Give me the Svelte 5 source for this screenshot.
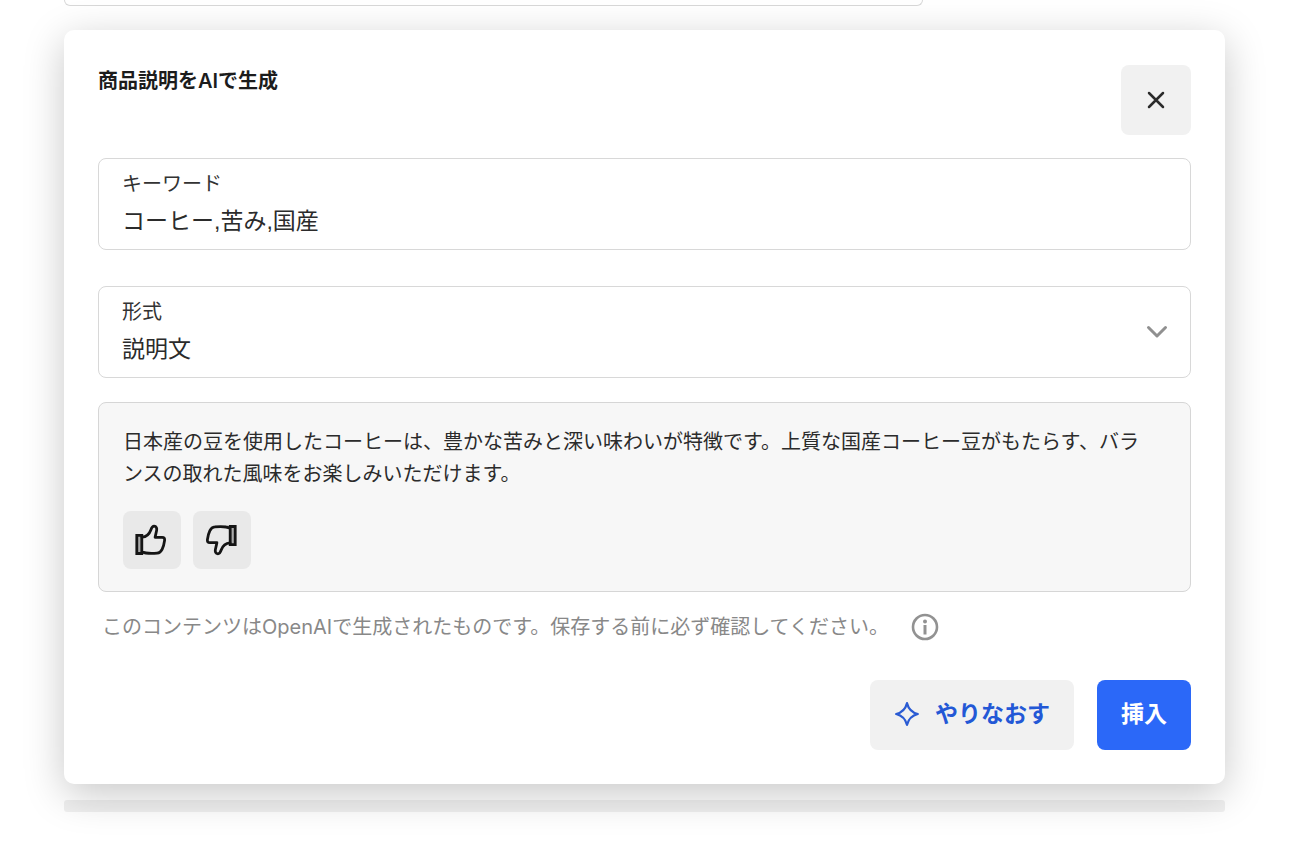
<script>
	let keywords = $state('コーヒー,苦み,国産');
	let format = $state('説明文');
	let open = $state(true);
	let rating = $state(null);

	const formats = ['説明文', '箇条書き'];
	const result =
		'日本産の豆を使用したコーヒーは、豊かな苦みと深い味わいが特徴です。上質な国産コーヒー豆がもたらす、バランスの取れた風味をお楽しみいただけます。';
</script>

<!-- thumb icon, flipped for the "down" button -->
{#snippet thumb()}
	<svg width="32" height="32" viewBox="0 0 32 32" fill="none" stroke="#151515" stroke-width="2.8" stroke-linejoin="round" stroke-linecap="round" aria-hidden="true">
		<path d="M1.800 11.300h5v18.200h-5z" fill="#aaa" stroke-linejoin="miter" />
		<path d="M7 13.200c4.500-.4 7.400-3.400 8.700-7 .8-2.300 1.600-4 3.400-4 2.300 0 3 2.100 2.500 4.300l-1.500 6.800h7c2.100 0 2.700 1.300 2.500 3-.5 3.800-1.300 6.600-2.500 9-1.200 2.400-2.600 3.600-4.900 3.800-3.600.4-8.300.4-11.300-.1-1.400-.2-2.400-.7-3.500-1" />
	</svg>
{/snippet}

<div class="page">
	<div class="behind-field"></div>

	{#if open}
		<section class="dialog" aria-labelledby="dialog-title">
			<header>
				<h2 id="dialog-title">商品説明をAIで生成</h2>
				<button class="close" aria-label="閉じる" onclick={() => (open = false)}>
					<svg width="18" height="18" viewBox="0 0 18 18" fill="none" stroke="#2b2b2b" stroke-width="2.500" stroke-linecap="round" aria-hidden="true">
						<path d="M2 2l14 14M16 2L2 16" />
					</svg>
				</button>
			</header>

			<div class="field">
				<div class="field-body">
					<label for="keywords">キーワード</label>
					<input id="keywords" type="text" bind:value={keywords} />
				</div>
			</div>

			<div class="field">
				<div class="field-body">
					<label for="format">形式</label>
					<select id="format" bind:value={format}>
						{#each formats as item}
							<option value={item}>{item}</option>
						{/each}
					</select>
				</div>
				<svg class="chevron" width="22" height="14" viewBox="0 0 22 14" fill="none" stroke="#909090" stroke-width="3" stroke-linecap="round" stroke-linejoin="round" aria-hidden="true">
					<path d="M2.500 2.500l8.500 8.500 8.500-8.500" />
				</svg>
			</div>

			<div class="result">
				<p>{result}</p>
				<div class="ratings">
					<button aria-label="良い" aria-pressed={rating === 'up'} onclick={() => (rating = 'up')}>
						{@render thumb()}
					</button>
					<button class="down" aria-label="悪い" aria-pressed={rating === 'down'} onclick={() => (rating = 'down')}>
						{@render thumb()}
					</button>
				</div>
			</div>

			<div class="note">
				<span>このコンテンツはOpenAIで生成されたものです。保存する前に必ず確認してください。</span>
				<svg width="28" height="28" viewBox="0 0 28 28" aria-hidden="true">
					<circle cx="14" cy="14" r="12" fill="none" stroke="#929292" stroke-width="2.600" />
					<circle cx="14" cy="8.600" r="2" fill="#929292" />
					<path d="M14 12v9.500" stroke="#929292" stroke-width="3" />
				</svg>
			</div>

			<footer>
				<button class="redo">
					<svg width="26" height="26" viewBox="0 0 26 26" fill="none" stroke="#2a5bd3" stroke-width="2.300" stroke-linejoin="round" aria-hidden="true">
						<path d="M13 2.200Q15.200 10.800 23.800 13 15.200 15.200 13 23.800 10.800 15.200 2.200 13 10.800 10.800 13 2.200z" />
					</svg>
					やりなおす
				</button>
				<button class="insert">挿入</button>
			</footer>
		</section>
	{/if}

	<div class="behind-bar"></div>
</div>

<style>
	:global(body) {
		background: #fff;
	}

	.page {
		box-sizing: border-box;
		padding: 0 75px 28px 64px;
		font-family: Inter, 'Noto Sans CJK JP', sans-serif;
		color: #2b2b2b;
	}

	.behind-field {
		box-sizing: border-box;
		width: 74%;
		height: 6px;
		border: 1px solid #d8d8d8;
		border-top: none;
		border-radius: 0 0 8px 8px;
	}

	.behind-bar {
		height: 12px;
		margin-top: 16px;
		border-radius: 3px;
		background: rgba(0, 0, 0, 0.06);
	}

	.dialog {
		/* keeps the shadow above the blocks around it */
		position: relative;
		z-index: 1;
		margin-top: 24px;
		padding: 35px 34px 34px;
		border-radius: 10px;
		background: #fff;
		box-shadow: 0 10px 40px rgba(0, 0, 0, 0.22);
	}

	header {
		display: flex;
		align-items: flex-start;
		justify-content: space-between;
		margin-bottom: 23px;
	}

	h2 {
		margin: 0;
		font-size: 20px;
		line-height: 32px;
		font-weight: 600;
		color: #1c1c1c;
	}

	button {
		display: flex;
		align-items: center;
		justify-content: center;
		padding: 0;
		border: none;
		border-radius: 8px;
		background: #f1f1f1;
		font: inherit;
		cursor: pointer;
	}

	.close {
		width: 70px;
		height: 70px;
	}

	.field {
		display: flex;
		align-items: center;
		margin-bottom: 36px;
		padding: 13px 22px 13px 23px;
		border: 1px solid #d8d8d8;
		border-radius: 8px;
	}

	.field + .field {
		margin-bottom: 24px;
	}

	.field-body {
		display: flex;
		flex: 1;
		flex-direction: column;
		gap: 10px;
	}

	label {
		font-size: 20px;
		line-height: 24px;
		color: #333;
	}

	input,
	select {
		width: 100%;
		height: 30px;
		padding: 0;
		border: none;
		outline: none;
		appearance: none;
		background: transparent;
		font-family: 'Liberation Sans', 'Noto Sans CJK JP', sans-serif;
		font-size: 23px;
		line-height: 30px;
		color: #2b2b2b;
	}

	.result {
		padding: 23px 32px 22px 24px;
		border: 1px solid #d6d6d6;
		border-radius: 8px;
		background: #f7f7f7;
	}

	.result p {
		margin: 0 0 21px;
		font-size: 20px;
		line-height: 32px;
	}

	.ratings {
		display: flex;
		gap: 12px;
	}

	.ratings button {
		width: 58px;
		height: 58px;
		padding-right: 2px;
		background: #e9e9e9;
	}

	.down :global(svg) {
		transform: rotate(180deg);
	}

	.note {
		display: flex;
		align-items: center;
		gap: 22px;
		margin: 21px 0 39px;
		padding-left: 4px;
		font-size: 20px;
		line-height: 28px;
		color: #888;
	}

	footer {
		display: flex;
		justify-content: flex-end;
		gap: 23px;
	}

	footer button {
		height: 70px;
		padding: 0 24px 2px;
		font-size: 23px;
		line-height: 30px;
		font-weight: 600;
	}

	.redo {
		gap: 15px;
		color: #2358d6;
	}

	.insert {
		background: #2b68f8;
		color: #fff;
	}
</style>
